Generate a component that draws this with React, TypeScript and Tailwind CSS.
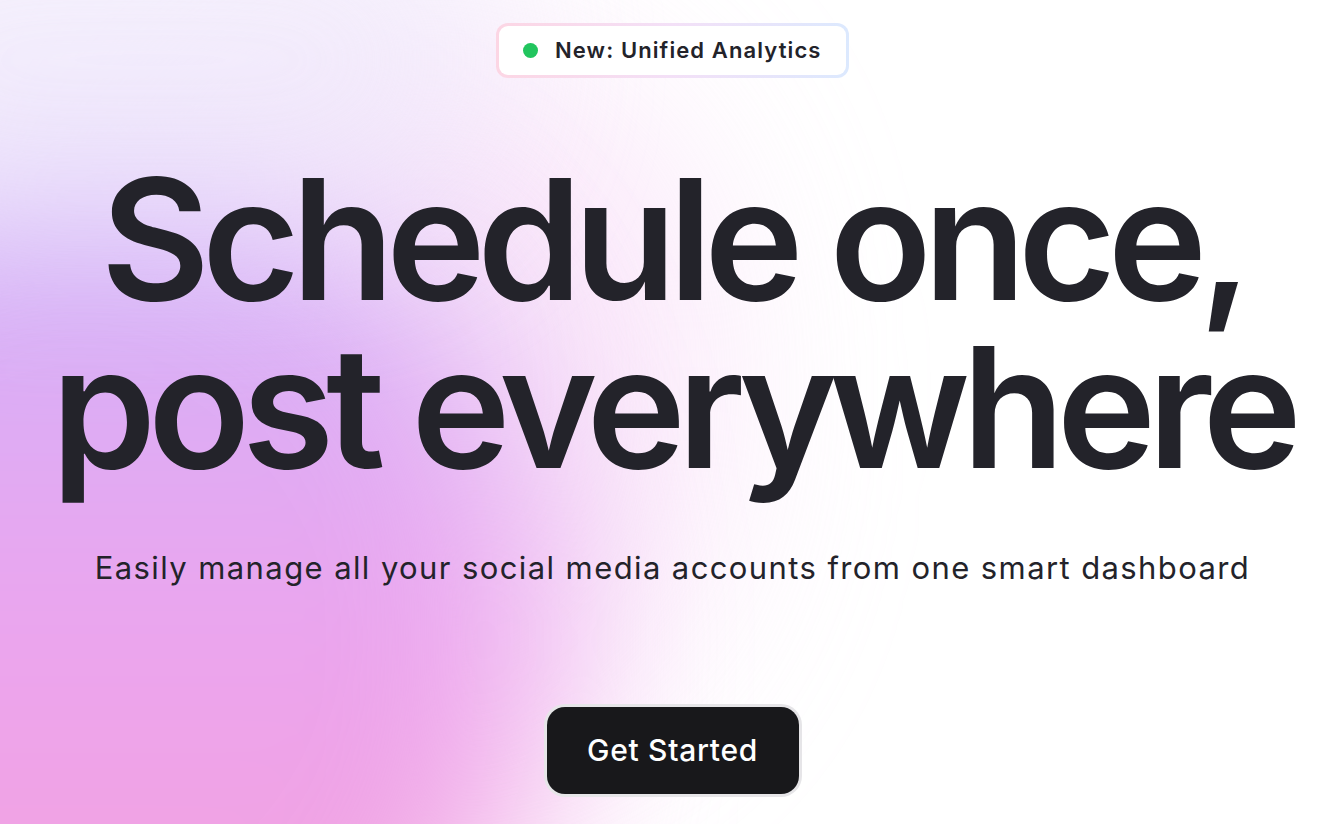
import React from "react";

export default function App() {
  return (
    <div
      className="relative h-[824px] w-full overflow-hidden bg-white text-[#23232a]"
      style={{ fontFamily: "Inter, 'Noto Sans', sans-serif" }}
    >
      {/* soft colour wash behind the hero */}
      <div className="pointer-events-none absolute left-[150px] top-[40px] h-[700px] w-[560px] rounded-full bg-[#f7d6f6] opacity-60 blur-[100px]" />
      <div className="pointer-events-none absolute -left-[380px] top-[140px] h-[1000px] w-[920px] rounded-full bg-gradient-to-b from-[#cbb4fa] via-[#eca4ee] to-[#f6a0d4] blur-[90px]" />
      <div className="pointer-events-none absolute -left-[200px] -top-[120px] h-[360px] w-[700px] rounded-full bg-[#efe8fb] opacity-70 blur-[80px]" />

      <main className="relative flex flex-col items-center pl-[9px] pt-[23px]">
        {/* announcement pill */}
        <div className="rounded-[12px] bg-gradient-to-r from-[#fcd6e4] via-[#f3e0f7] to-[#dce9fe] p-[3px]">
          <div className="flex h-[49px] w-[347px] items-center gap-[17px] rounded-[9px] bg-white pl-[24px]">
            <span className="h-[15px] w-[15px] rounded-full bg-[#22c55e]" />
            <span className="text-[22px] font-semibold tracking-[0.05em] text-[#23232a]">
              New: Unified Analytics
            </span>
          </div>
        </div>

        <h1 className="mt-[77px] flex flex-col items-center text-[168px] font-semibold leading-[168px] tracking-[-0.049em]">
          <span>Schedule once,</span>
          <span>post everywhere</span>
        </h1>

        <p className="mt-[59px] text-[31px] leading-[36px] tracking-[1.4px] text-[#23232a]">
          Easily manage all your social media accounts from one smart dashboard
        </p>

        <div className="mt-[118px] rounded-[21px] bg-[#e6e5e8] p-[3px]">
          <button className="flex h-[87px] w-[252px] items-center justify-center rounded-[18px] bg-[#18181b] text-[30px] font-medium tracking-[0.7px] text-white">
            Get Started
          </button>
        </div>
      </main>
    </div>
  );
}
